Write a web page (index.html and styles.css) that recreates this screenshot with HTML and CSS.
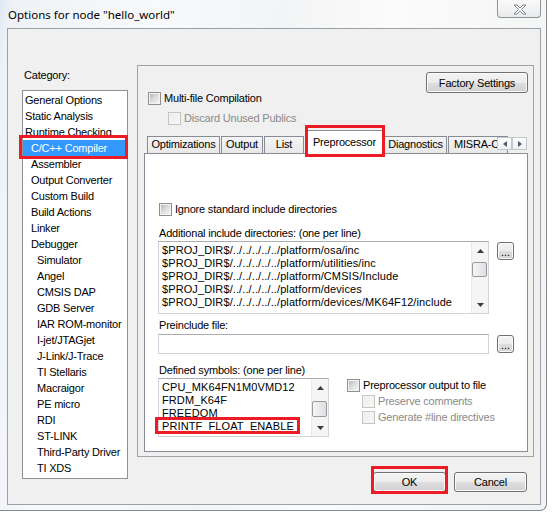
FILE: index.html
```html
<!DOCTYPE html>
<html>
<head>
<meta charset="utf-8">
<title>Options for node "hello_world"</title>
<link rel="stylesheet" href="styles.css">
</head>
<body>
<div class="window">
  <div class="titlebar">
    <div class="title">Options for node "hello_world"</div>
    <div class="close">
      <svg width="14" height="11" viewBox="0 0 14 11"><path d="M1 1 H4 L7 4 L10 1 H13 L8.5 5.5 L13 10 H10 L7 7 L4 10 H1 L5.5 5.5 Z" fill="#fdfdfd" stroke="#7f858c" stroke-width="1" stroke-linejoin="round"/></svg>
    </div>
  </div>
  <div class="client">
    <div class="main">
      <div class="left">
        <div class="cat-label">Category:</div>
        <div class="list">
          <div class="item l1">General Options</div>
          <div class="item l1">Static Analysis</div>
          <div class="item l1">Runtime Checking</div>
          <div class="item l2 sel">C/C++ Compiler</div>
          <div class="item l2">Assembler</div>
          <div class="item l2">Output Converter</div>
          <div class="item l2">Custom Build</div>
          <div class="item l2">Build Actions</div>
          <div class="item l2">Linker</div>
          <div class="item l2">Debugger</div>
          <div class="item l3">Simulator</div>
          <div class="item l3">Angel</div>
          <div class="item l3">CMSIS DAP</div>
          <div class="item l3">GDB Server</div>
          <div class="item l3">IAR ROM-monitor</div>
          <div class="item l3">I-jet/JTAGjet</div>
          <div class="item l3">J-Link/J-Trace</div>
          <div class="item l3">TI Stellaris</div>
          <div class="item l3">Macraigor</div>
          <div class="item l3">PE micro</div>
          <div class="item l3">RDI</div>
          <div class="item l3">ST-LINK</div>
          <div class="item l3">Third-Party Driver</div>
          <div class="item l3">TI XDS</div>
        </div>
      </div>
      <div class="right">
        <div class="panel">
          <div class="panel-top">
            <div class="top-checks">
              <div class="chk"><span class="cb"></span><span>Multi-file Compilation</span></div>
              <div class="chk sub disabled"><span class="cb"></span><span>Discard Unused Publics</span></div>
            </div>
            <div class="btn factory">Factory Settings</div>
          </div>
          <div class="tabs-wrap">
            <div class="tabstrip">
              <div class="tab t-opt">Optimizations</div>
              <div class="tab t-out">Output</div>
              <div class="tab t-list">List</div>
              <div class="tab active t-pre">Preprocessor</div>
              <div class="tab t-diag">Diagnostics</div>
              <div class="tab t-misra">MISRA-C</div>
              <div class="updown">
                <div class="ud"><svg width="4" height="6" viewBox="0 0 4 6"><path d="M4 0 V6 L0 3 Z" fill="#4f5d73"/></svg></div>
                <div class="ud"><svg width="4" height="6" viewBox="0 0 4 6"><path d="M0 0 V6 L4 3 Z" fill="#4f5d73"/></svg></div>
              </div>
            </div>
            <div class="page">
              <div class="chk ignore"><span class="cb"></span><span>Ignore standard include directories</span></div>
              <div class="lbl l-add">Additional include directories: (one per line)</div>
              <div class="frow r1">
                <div class="ta inc">
                  <div class="ta-lines">
                    <div>$PROJ_DIR$/../../../../../platform/osa/inc</div>
                    <div>$PROJ_DIR$/../../../../../platform/utilities/inc</div>
                    <div>$PROJ_DIR$/../../../../../platform/CMSIS/Include</div>
                    <div>$PROJ_DIR$/../../../../../platform/devices</div>
                    <div>$PROJ_DIR$/../../../../../platform/devices/MK64F12/include</div>
                  </div>
                  <div class="sb">
                    <div class="sb-arr"><svg width="7" height="4" viewBox="0 0 7 4"><path d="M0 4 L3.5 0 L7 4 Z" fill="#3c3c3c"/></svg></div>
                    <div class="sb-track"><div class="thumb th1"></div></div>
                    <div class="sb-arr"><svg width="7" height="4" viewBox="0 0 7 4"><path d="M0 0 L3.5 4 L7 0 Z" fill="#3c3c3c"/></svg></div>
                  </div>
                </div>
                <div class="btn dots">...</div>
              </div>
              <div class="lbl l-pre">Preinclude file:</div>
              <div class="frow r2">
                <div class="ta inp"></div>
                <div class="btn dots">...</div>
              </div>
              <div class="lbl l-def">Defined symbols: (one per line)</div>
              <div class="frow r3">
                <div class="ta def">
                  <div class="ta-lines">
                    <div>CPU_MK64FN1M0VMD12</div>
                    <div>FRDM_K64F</div>
                    <div>FREEDOM</div>
                    <div class="marked-line">PRINTF_FLOAT_ENABLE</div>
                  </div>
                  <div class="sb">
                    <div class="sb-arr"><svg width="7" height="4" viewBox="0 0 7 4"><path d="M0 4 L3.5 0 L7 4 Z" fill="#3c3c3c"/></svg></div>
                    <div class="sb-track"><div class="thumb th2"></div></div>
                    <div class="sb-arr"><svg width="7" height="4" viewBox="0 0 7 4"><path d="M0 0 L3.5 4 L7 0 Z" fill="#3c3c3c"/></svg></div>
                  </div>
                </div>
                <div class="pp">
                  <div class="chk"><span class="cb"></span><span>Preprocessor output to file</span></div>
                  <div class="chk sub2 disabled"><span class="cb"></span><span>Preserve comments</span></div>
                  <div class="chk sub2 disabled"><span class="cb"></span><span>Generate #line directives</span></div>
                </div>
              </div>
            </div>
          </div>
        </div>
        <div class="btnrow">
          <div class="btn ok">OK</div>
          <div class="btn">Cancel</div>
        </div>
      </div>
    </div>
  </div>
</div>
</body>
</html>
```
FILE: styles.css
```css
html, body {
  margin: 0;
  padding: 0;
}
body {
  width: 552px;
  height: 515px;
  overflow: hidden;
  background: #ffffff;
  font-family: "Liberation Sans", Arial, sans-serif;
  font-size: 11px;
  letter-spacing: -0.2px;
  color: #000;
}

.window {
  box-sizing: border-box;
  width: 547px;
  height: 511px;
  border-right: 1px solid #848b93;
  border-bottom: 1px solid #848b93;
  border-bottom-right-radius: 7px;
  background: linear-gradient(100deg, #dfe8f2 0%, #eef2f6 2%, #f8f9fa 25%, #f3f4f5 45%, #fbfbfb 62%, #f1f2f3 100%);
  display: flex;
  flex-direction: column;
}

.titlebar {
  height: 28px;
  flex-shrink: 0;
  display: flex;
  align-items: flex-start;
}
.title {
  margin: 7px 0 0 8px;
  font-family: "Noto Sans", "Open Sans", sans-serif;
  font-size: 11.5px;
  line-height: 15px;
  letter-spacing: 0;
  color: #000;
  white-space: nowrap;
}
.close {
  margin-left: auto;
  margin-right: 5px;
  width: 44px;
  height: 18px;
  box-sizing: border-box;
  border: 1px solid #8d939a;
  border-top: none;
  border-radius: 0 0 4px 4px;
  background: linear-gradient(#fafafa, #e9eaec);
  display: flex;
  align-items: center;
  justify-content: center;
  padding: 1px 0 0 2px;
}

.client {
  margin-left: 7px;
  width: 534px;
  height: 477px;
  box-sizing: border-box;
  border: 1px solid #9ba1a8;
  background: #f0f0f0;
}

.main {
  display: flex;
  align-items: flex-start;
}

.left {
  margin: 40px 0 0 14px;
  width: 106px;
  flex-shrink: 0;
}
.cat-label {
  line-height: 13px;
  padding-left: 2px;
  white-space: nowrap;
}
.list {
  margin-top: 8px;
  box-sizing: border-box;
  height: 389px;
  border: 1px solid #8f9296;
  background: #fff;
  padding: 1px 0 2px;
}
.item {
  height: 16px;
  line-height: 16px;
  white-space: nowrap;
}
.item.l1 { padding-left: 2px; }
.item.l2 { padding-left: 8px; }
.item.l3 { padding-left: 14px; }
.item.sel {
  position: relative;
  background: #3399ff;
  color: #fff;
}
.item.sel::after {
  content: "";
  position: absolute;
  left: -4px;
  right: -1px;
  top: -5px;
  bottom: -3px;
  border: 3px solid #ed1c24;
}

.right {
  margin: 36px 0 0 9px;
  width: 397px;
  display: flex;
  flex-direction: column;
}
.panel {
  box-sizing: border-box;
  height: 392px;
  border: 1px solid #a3a3a3;
}
.panel-top {
  height: 64px;
  display: flex;
  align-items: flex-start;
}
.top-checks {
  padding: 26px 0 0 10px;
}

.chk {
  display: flex;
  align-items: center;
  height: 13px;
  line-height: 13px;
  white-space: nowrap;
}
.cb {
  position: relative;
  width: 13px;
  height: 13px;
  box-sizing: border-box;
  border: 1px solid #8e8f8f;
  background: #f4f4f4;
  margin-right: 3px;
  flex-shrink: 0;
}
.cb::before {
  content: "";
  position: absolute;
  left: 1px;
  top: 1px;
  right: 1px;
  bottom: 1px;
  background: linear-gradient(135deg, #b4b8bd 0%, #d9dbde 45%, #f3f3f3 100%);
}
.disabled { color: #8a8a8a; }
.disabled .cb { border-color: #c5c5c5; }
.disabled .cb::before { background: linear-gradient(135deg, #ececec, #f8f8f8); }
.chk.sub { margin: 7px 0 0 20px; }

.btn {
  box-sizing: border-box;
  border: 1px solid #707070;
  border-radius: 3px;
  background: linear-gradient(#f3f3f3 0%, #ececec 50%, #dedede 51%, #d1d1d1 100%);
  box-shadow: inset 0 0 0 1px #fbfbfb;
  display: flex;
  align-items: center;
  justify-content: center;
  white-space: nowrap;
}
.factory {
  margin: 6px 5px 0 auto;
  width: 102px;
  height: 21px;
}

.tabs-wrap {
  margin-left: 6px;
  width: 384px;
}
.tabstrip {
  position: relative;
  height: 24px;
  display: flex;
  align-items: flex-start;
  padding-left: 3px;
  z-index: 1;
}
.tab {
  box-sizing: border-box;
  height: 17px;
  margin-top: 6px;
  border: 1px solid #898c95;
  border-bottom: none;
  background: linear-gradient(#f5f5f5, #e8e8e8);
  line-height: 15px;
  text-align: center;
  white-space: nowrap;
  overflow: hidden;
  flex-shrink: 0;
}
.t-opt { width: 73px; margin-right: 1px; }
.t-out { width: 42px; margin-right: 1px; }
.t-list { width: 40px; margin-right: 1px; }
.t-pre { width: 79px; }
.t-diag { width: 63px; margin-right: 1px; }
.t-misra { width: 60px; text-align: left; padding-left: 5px; }
.tab.active {
  position: relative;
  z-index: 2;
  height: 24px;
  margin-top: 0;
  padding-top: 4px;
  background: #fff;
  overflow: visible;
}
.tab.active::after {
  content: "";
  position: absolute;
  left: -1px;
  right: -2px;
  top: -6px;
  bottom: -3px;
  border: 3px solid #ed1c24;
}
.updown {
  position: absolute;
  right: 1px;
  top: 7px;
  display: flex;
  z-index: 3;
}
.ud {
  width: 15px;
  height: 13px;
  box-sizing: border-box;
  border: 1px solid #c2c6cd;
  background: linear-gradient(#fefefe, #eff1f4);
  display: flex;
  align-items: center;
  justify-content: center;
}

.page {
  margin-top: -1px;
  box-sizing: border-box;
  height: 299px;
  border: 1px solid #898c95;
  background: #fff;
  padding-left: 13px;
}
.chk.ignore {
  margin-top: 49px;
  padding-left: 1px;
}
.lbl {
  line-height: 13px;
  padding-left: 1px;
  white-space: nowrap;
}
.l-add { margin-top: 11px; }
.l-pre { margin-top: 5px; }
.l-def { margin-top: 10px; }

.frow {
  display: flex;
  align-items: flex-start;
}
.r1 { margin-top: 1px; }
.r2 { margin-top: 2px; }
.r3 { margin-top: 1px; }

.ta {
  box-sizing: border-box;
  border: 1px solid #d0d3d8;
  border-top-color: #abadb3;
  background: #fff;
  display: flex;
  flex-shrink: 0;
}
.ta.inc { width: 331px; height: 73px; }
.ta.inp { width: 331px; height: 20px; }
.ta.def { width: 171px; height: 59px; }
.ta-lines {
  flex: 1;
  min-width: 0;
  padding: 2px 0 0 3px;
  line-height: 13px;
  white-space: nowrap;
  letter-spacing: 0.1px;
}
.marked-line {
  position: relative;
}
.marked-line::after {
  content: "";
  position: absolute;
  left: -7px;
  top: -3px;
  width: 145px;
  height: 17px;
  box-sizing: border-box;
  border: 3px solid #ed1c24;
}

.sb {
  width: 17px;
  flex-shrink: 0;
  box-sizing: border-box;
  border-left: 1px solid #e9e9e9;
  background: #f5f5f5;
  display: flex;
  flex-direction: column;
}
.sb-arr {
  height: 17px;
  flex-shrink: 0;
  display: flex;
  align-items: center;
  justify-content: center;
}
.sb-track { flex: 1; }
.thumb {
  box-sizing: border-box;
  margin-right: 1px;
  border: 1px solid #999a9c;
  border-radius: 2px;
  background: linear-gradient(to right, #f5f5f5, #dedfe1);
}
.th1 { margin-top: 3px; height: 15px; }
.th2 { margin-top: 5px; height: 16px; }

.dots {
  margin: 1px 0 0 8px;
  width: 17px;
  height: 18px;
  align-items: flex-end;
  padding-bottom: 3px;
  line-height: 8px;
  letter-spacing: 0;
  flex-shrink: 0;
}

.pp {
  margin: 1px 0 0 18px;
}
.chk.sub2 { margin: 3px 0 0 15px; }

.btnrow {
  display: flex;
  justify-content: flex-end;
  gap: 8px;
  margin-top: 15px;
  padding-right: 7px;
}
.btnrow .btn {
  width: 73px;
  height: 20px;
}
.btn.ok { position: relative; }
.btn.ok::after {
  content: "";
  position: absolute;
  left: -3px;
  right: -3px;
  top: -7px;
  bottom: -3px;
  border: 3px solid #ed1c24;
}
```
